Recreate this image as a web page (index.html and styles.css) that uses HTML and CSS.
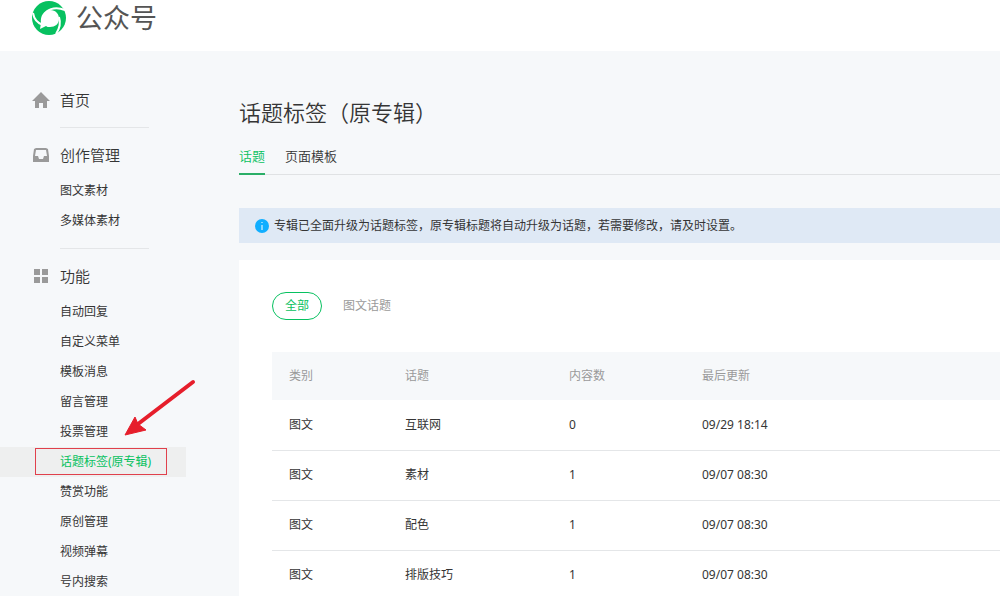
FILE: index.html
```html
<!DOCTYPE html>
<html lang="zh-CN">
<head>
  <meta charset="UTF-8" />
  <meta name="viewport" content="width=device-width, initial-scale=1.0" />
  <title>公众号</title>
  <link rel="stylesheet" href="styles.css">
</head>
<body>
  <header class="header">
    <svg class="logo" viewBox="0 0 36 36" aria-hidden="true">
      <circle cx="17" cy="18" r="17" fill="#07c160" />
      <path d="M18 10c6 0 9 4 9 9s-4 8-9 8c-2 0-3 0-4-1l-6 3 1-6c-1-7 3-13 9-13z" fill="#fff" />
      <path d="M14 12c5-4 11-5 19-2M1 13c1 6 4 10 10 12M27 17c2 6 1 11-3 17" fill="none" stroke="#fff" stroke-width="2" />
    </svg>
    <span class="logo-text">公众号</span>
  </header>

  <div class="page">
    <nav class="menu">
      <section class="menu-group">
        <h2 class="menu-title">
          <svg class="menu-icon" viewBox="0 0 18 18"><path fill="#9a9a9a" d="M9 1l9 9h-3v7h-4v-5H7v5H3v-7H0z" /></svg>
          首页
        </h2>
      </section>

      <section class="menu-group">
        <h2 class="menu-title">
          <svg class="menu-icon" viewBox="0 0 18 18"><path fill="#9a9a9a" fill-rule="evenodd" d="M4 2h10l2 1 1 7v6H1v-6l1-7zM4 4L3 10h3l1 3h4l1-3h3l-1-6z" /></svg>
          创作管理
        </h2>
        <ul class="menu-list">
          <li><a href="#">图文素材</a></li>
          <li><a href="#">多媒体素材</a></li>
        </ul>
      </section>

      <section class="menu-group">
        <h2 class="menu-title">
          <svg class="menu-icon" viewBox="0 0 18 18"><path fill="#9a9a9a" d="M2 2h6v6H2zM10 2h6v6h-6zM2 10h6v6H2zM10 10h6v6h-6z" /></svg>
          功能
        </h2>
        <ul class="menu-list">
          <li><a href="#">自动回复</a></li>
          <li><a href="#">自定义菜单</a></li>
          <li><a href="#">模板消息</a></li>
          <li><a href="#">留言管理</a></li>
          <li><a href="#">投票管理</a></li>
          <li class="selected">
            <a href="#">话题标签(原专辑)</a>
            <span class="mark-box"></span>
            <svg class="mark-arrow" viewBox="0 0 72 58" aria-hidden="true">
              <path d="M69 4L14 46" stroke="#e61e2b" stroke-width="4" stroke-linecap="round" />
              <path d="M1 57L11 39l3 7 8 6z" fill="#e61e2b" stroke="#e61e2b" stroke-linejoin="round" />
            </svg>
          </li>
          <li><a href="#">赞赏功能</a></li>
          <li><a href="#">原创管理</a></li>
          <li><a href="#">视频弹幕</a></li>
          <li><a href="#">号内搜索</a></li>
        </ul>
      </section>
    </nav>

    <main class="content">
      <h1>话题标签（原专辑）</h1>
      <div class="tabs">
        <a class="tab active" href="#">话题</a>
        <a class="tab" href="#">页面模板</a>
      </div>

      <div class="notice">
        <svg class="info" viewBox="0 0 14 14" aria-hidden="true">
          <circle cx="7" cy="7" r="7" fill="#10aeff" />
          <path d="M7 6v5M7 3v1" stroke="#fff" />
        </svg>
        专辑已全面升级为话题标签，原专辑标题将自动升级为话题，若需要修改，请及时设置。
      </div>

      <div class="card">
        <div class="filters">
          <button class="filter active" type="button">全部</button>
          <button class="filter" type="button">图文话题</button>
        </div>
        <table class="topics">
          <thead>
            <tr><th class="col-type">类别</th><th class="col-topic">话题</th><th class="col-count">内容数</th><th>最后更新</th></tr>
          </thead>
          <tbody>
            <tr><td>图文</td><td>互联网</td><td>0</td><td>09/29 18:14</td></tr>
            <tr><td>图文</td><td>素材</td><td>1</td><td>09/07 08:30</td></tr>
            <tr><td>图文</td><td>配色</td><td>1</td><td>09/07 08:30</td></tr>
            <tr><td>图文</td><td>排版技巧</td><td>1</td><td>09/07 08:30</td></tr>
          </tbody>
        </table>
      </div>
    </main>
  </div>
</body>
</html>
```

FILE: styles.css
```css
* { box-sizing: border-box; }
body { margin: 0; background: #f6f8fa; color: #353535; font: 12px/20px "Noto Sans", "Noto Sans CJK SC", sans-serif; }
a { color: inherit; text-decoration: none; }
h1, h2 { margin: 0; font-weight: 350; }

.header { display: flex; align-items: center; gap: 8px; height: 51px; padding: 0 32px 15px; background: #fff; }
.logo { width: 36px; height: 36px; }
.logo-text { font-size: 27px; line-height: 36px; color: #555; font-weight: 400; }

.page { display: flex; align-items: stretch; }

.menu { flex: none; width: 186px; padding-top: 34px; }
.menu-group + .menu-group::before { content: ""; display: block; height: 1px; margin: 12px 37px 12px 60px; background: #e4e6e8; }
.menu-title { display: flex; align-items: center; gap: 10px; height: 30px; padding-left: 32px; font-size: 15px; }
.menu-icon { width: 18px; height: 18px; }
.menu-list { list-style: none; margin: 6px 0 0; padding: 0; }
.menu-list li { position: relative; }
.menu-list a { display: block; padding-left: 60px; line-height: 30px; }
.selected { background: #eeefef; color: #07c160; }
.mark-box { position: absolute; left: 35px; right: 19px; top: 1px; bottom: 2px; border: 1px solid #e0404c; }
.mark-arrow { position: absolute; left: 124px; bottom: 41px; width: 72px; height: 58px; fill: none; }

.content { flex: 1; min-width: 0; padding: 46px 0 0 53px; }
h1 { font-size: 22px; line-height: 30px; }
.tabs { display: flex; gap: 20px; margin-top: 13px; border-bottom: 1px solid #e0e2e4; font-size: 13px; }
.tab { margin-bottom: -1px; padding: 6px 0 7px; border-bottom: 2px solid transparent; font-weight: 350; }
.tab.active { color: #07c160; border-color: #2aae67; }

.notice { display: flex; align-items: center; gap: 5px; margin-top: 33px; padding: 0 16px; height: 35px; background: #dfe9f5; }
.info { width: 14px; height: 14px; }

.card { margin-top: 17px; padding: 32px 0 0 33px; background: #fff; }
.filters { display: flex; gap: 8px; }
.filter { height: 28px; padding: 0 12px; border: 1px solid transparent; border-radius: 14px; background: none; color: #9a9a9a; font: inherit; cursor: pointer; }
.filter.active { border-color: #07c160; color: #07c160; }

.topics { width: 100%; margin-top: 32px; border-collapse: collapse; table-layout: fixed; }
.topics th { height: 48px; padding: 0 17px; background: #f6f8fa; color: #9a9a9a; font-weight: 400; text-align: left; }
.topics td { height: 50px; padding: 0 17px; border-bottom: 1px solid #e4e6e8; }
.col-type { width: 116px; }
.col-topic { width: 164px; }
.col-count { width: 133px; }
```
